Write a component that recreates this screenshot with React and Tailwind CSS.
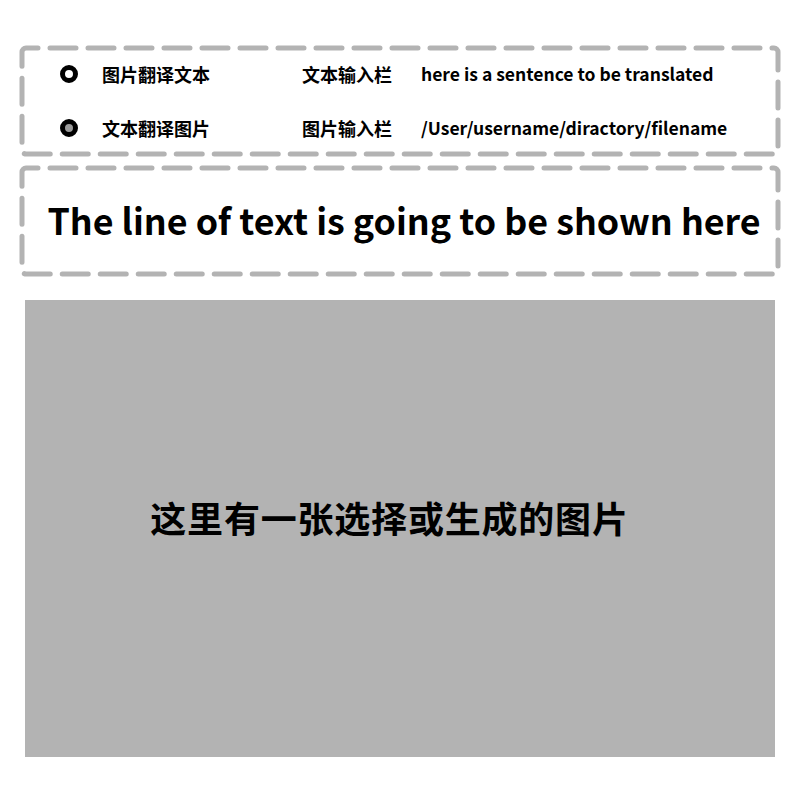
import React from 'react'

const font = { fontFamily: '"Noto Sans CJK SC", "Noto Sans", sans-serif' }

// dashed frame with round caps, drawn over its box
const DashedFrame = ({ w, h }) => (
    <svg className="absolute inset-0 pointer-events-none" width={w} height={h}>
        <rect
            x="3" y="3" width={w - 6} height={h - 6} rx="4"
            fill="none" stroke="#b3b3b3" strokeWidth="5"
            strokeDasharray="26 12" strokeDashoffset="14" strokeLinecap="round"
        />
    </svg>
)

const Radio = ({ filled }) => (
    <span className={`block w-[18px] h-[18px] rounded-full border-[5px] border-black ${filled ? 'bg-[#9a9a9a]' : 'bg-white'}`} />
)

const rows = [
    { label: '图片翻译文本', field: '文本输入栏', value: 'here is a sentence to be translated', filled: false },
    { label: '文本翻译图片', field: '图片输入栏', value: '/User/username/diractory/filename', filled: true },
]

export default function App() {
    return (
        <div className="w-[800px] h-[800px] bg-white px-[19px] pt-[45px] text-black" style={font}>
            {/* options */}
            <div className="relative h-[112px] pt-[2px]">
                <DashedFrame w={762} h={112} />
                {rows.map((r) => (
                    <div key={r.label} className="flex items-center h-[54px] pl-[41px] font-bold">
                        <Radio filled={r.filled} />
                        <span className="ml-[24px] w-[200px] text-[18px]">{r.label}</span>
                        <span className="w-[119px] text-[18px]">{r.field}</span>
                        <span className="text-[17.5px] whitespace-nowrap">{r.value}</span>
                    </div>
                ))}
            </div>

            {/* output line */}
            <div className="relative h-[112px] mt-[8px] flex items-center justify-center pl-[8px] pb-[2px]">
                <DashedFrame w={762} h={112} />
                <span className="text-[35.8px] font-bold whitespace-nowrap">The line of text is going to be shown here</span>
            </div>

            {/* picture area */}
            <div className="mx-[6px] mt-[23px] h-[457px] bg-[#b3b3b3] flex items-center justify-center pr-[21px] pb-[24px]">
                <span className="text-[36px] font-bold tracking-[0.8px]">这里有一张选择或生成的图片</span>
            </div>
        </div>
    )
}
